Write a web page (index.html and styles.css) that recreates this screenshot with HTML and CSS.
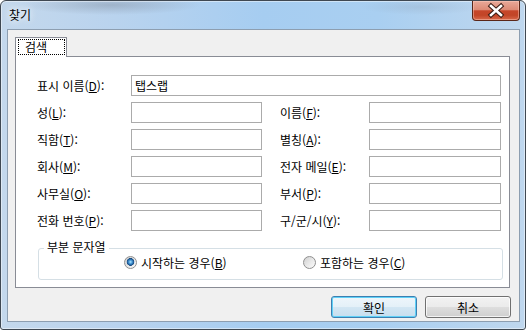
FILE: index.html
```html
<!DOCTYPE html>
<html lang="ko">
<head>
<meta charset="utf-8">
<title>찾기</title>
<link rel="stylesheet" href="styles.css">
</head>
<body>
<div class="window">
  <div class="titlebar">
    <span class="title">찾기</span>
    <div class="close">
      <svg width="46" height="19" viewBox="0 0 46 19">
        <path d="M18 5 L28 14 M28 5 L18 14" stroke="#3b1c14" stroke-width="4.6" stroke-linecap="square" fill="none"/>
        <path d="M18 5 L28 14 M28 5 L18 14" stroke="#ffffff" stroke-width="2.6" stroke-linecap="square" fill="none"/>
      </svg>
    </div>
  </div>
  <div class="client">
    <div class="tabs">
      <div class="tab"><span class="focus">검색</span></div>
    </div>
    <div class="page">
      <div class="form">
        <span class="lbl">표시 이름(<u>D</u>):</span>
        <div class="field wide">탭스랩</div>

        <span class="lbl">성(<u>L</u>):</span>
        <div class="field"></div>
        <span class="lbl right">이름(<u>F</u>):</span>
        <div class="field"></div>

        <span class="lbl">직함(<u>T</u>):</span>
        <div class="field"></div>
        <span class="lbl right">별칭(<u>A</u>):</span>
        <div class="field"></div>

        <span class="lbl">회사(<u>M</u>):</span>
        <div class="field"></div>
        <span class="lbl right">전자 메일(<u>E</u>):</span>
        <div class="field"></div>

        <span class="lbl">사무실(<u>O</u>):</span>
        <div class="field"></div>
        <span class="lbl right">부서(<u>P</u>):</span>
        <div class="field"></div>

        <span class="lbl">전화 번호(<u>P</u>):</span>
        <div class="field"></div>
        <span class="lbl right">구/군/시(<u>Y</u>):</span>
        <div class="field"></div>
      </div>
      <div class="group">
        <span class="legend">부분 문자열</span>
        <span class="opt first"><span class="radio on"></span>시작하는 경우(<u>B</u>)</span>
        <span class="opt"><span class="radio"></span>포함하는 경우(<u>C</u>)</span>
      </div>
    </div>
    <div class="buttons">
      <button class="btn default">확인</button>
      <button class="btn">취소</button>
    </div>
  </div>
</div>
</body>
</html>
```
FILE: styles.css
```css
html, body {
  margin: 0;
  padding: 0;
  background: #ffffff;
}

body {
  font-family: "Noto Sans CJK KR", "Noto Sans", sans-serif;
  font-size: 12px;
  color: #000;
}

.window {
  width: 526px;
  height: 330px;
  box-sizing: border-box;
  border: 1px solid #3f4852;
  border-radius: 6px 6px 3px 3px;
  background:
    radial-gradient(ellipse 90px 10px at 110px 4px, rgba(110,120,135,0.35), rgba(110,120,135,0) 100%),
    radial-gradient(ellipse 60px 8px at 420px 6px, rgba(120,130,145,0.18), rgba(120,130,145,0) 100%),
    linear-gradient(90deg, #c4d8ec 0%, #b9d3ee 22%, #a6cdf1 50%, #a9cff1 72%, #bfd7ee 100%);
  box-shadow: inset 0 0 0 1px rgba(255,255,255,0.45);
  display: flex;
  flex-direction: column;
  overflow: hidden;
}

.titlebar {
  height: 28px;
  display: flex;
  align-items: flex-start;
  padding: 0 5px 0 8px;
  flex: none;
}

.title {
  line-height: 28px;
  font-size: 12px;
  text-shadow: 0 0 6px rgba(255,255,255,0.95), 0 0 10px rgba(255,255,255,0.8);
}

.close {
  margin-left: auto;
  width: 48px;
  height: 20px;
  box-sizing: border-box;
  border: 1px solid #5a2618;
  border-top: none;
  border-radius: 0 0 4px 4px;
  background: linear-gradient(180deg, #e8a999 0%, #dd8b76 45%, #c6462a 52%, #c24527 75%, #d8694b 100%);
  box-shadow: inset 0 0 0 1px rgba(255,210,195,0.45);
  display: flex;
  align-items: center;
  justify-content: center;
}

.close svg {
  display: block;
}

.client {
  margin: 0 5px 0 6px;
  height: 293px;
  box-sizing: border-box;
  border: 1px solid #8d9eb0;
  background: #f0f0f0;
  padding: 7px 8px 3px 7px;
  display: flex;
  flex-direction: column;
  flex: none;
}

.tabs {
  height: 19px;
  display: flex;
  flex: none;
}

.tab {
  width: 52px;
  height: 20px;
  box-sizing: border-box;
  border: 1px solid #898c95;
  border-bottom: none;
  background: #ffffff;
  padding: 1px 2px 0 2px;
  position: relative;
  z-index: 1;
}

.focus {
  display: block;
  width: 47px;
  height: 16px;
  box-sizing: border-box;
  border: 1px dotted #000;
  line-height: 14px;
  padding-left: 6px;
}

.page {
  width: 495px;
  height: 232px;
  box-sizing: border-box;
  border: 1px solid #898c95;
  background: #ffffff;
  padding: 18px 0 0 21px;
  flex: none;
}

.form {
  display: grid;
  grid-template-columns: 94px 131px 107px 132px;
  grid-auto-rows: 21px;
  row-gap: 6px;
  align-items: center;
}

.lbl {
  white-space: nowrap;
  line-height: 16px;
}

.lbl.right {
  padding-left: 18px;
}

.field {
  height: 21px;
  box-sizing: border-box;
  border: 1px solid #ababab;
  background: #ffffff;
  line-height: 19px;
  padding-left: 3px;
}

.field.wide {
  grid-column: 2 / 5;
}

.group {
  margin: 17px 0 0 1px;
  width: 465px;
  height: 32px;
  box-sizing: border-box;
  border: 1px solid #d5dfe5;
  border-radius: 3px;
  position: relative;
  display: flex;
  align-items: center;
  padding: 0 0 3px 85px;
}

.legend {
  position: absolute;
  top: -10px;
  left: 5px;
  line-height: 16px;
  padding: 0 3px;
  background: #ffffff;
}

.opt {
  display: flex;
  align-items: center;
  white-space: nowrap;
  line-height: 16px;
}

.opt.first {
  width: 179px;
}

.radio {
  width: 13px;
  height: 13px;
  box-sizing: border-box;
  border-radius: 50%;
  border: 1px solid #8f8f8f;
  background: linear-gradient(135deg, #d0d0d0 0%, #e8e8e8 50%, #fbfbfb 100%);
  margin-right: 4px;
  flex: none;
}

.radio.on {
  background:
    radial-gradient(circle at 50% 45%, #b6e8ff 0px, #55a6e0 1.4px, #1f5f9e 3px, #17487c 3.6px, rgba(0,0,0,0) 4.1px),
    linear-gradient(135deg, #cfcfcf 0%, #e6e6e6 50%, #fafafa 100%);
}

.buttons {
  margin-top: 8px;
  display: flex;
  justify-content: flex-end;
  gap: 8px;
  flex: none;
}

.btn {
  width: 86px;
  height: 22px;
  box-sizing: border-box;
  margin: 0;
  padding: 0;
  font-family: inherit;
  font-size: 12px;
  color: #000;
  border: 1px solid #707070;
  border-radius: 3px;
  background: linear-gradient(180deg, #f2f2f2 0%, #ebebeb 48%, #dddddd 52%, #cfcfcf 100%);
  box-shadow: inset 0 0 0 1px rgba(255,255,255,0.75);
}

.btn.default {
  border-color: #3c7fb1;
  background: linear-gradient(180deg, #eef6fb 0%, #e4f0f8 48%, #d2e6f3 52%, #c7deee 100%);
  box-shadow: inset 0 0 0 1px #5fd0f7;
}
```
